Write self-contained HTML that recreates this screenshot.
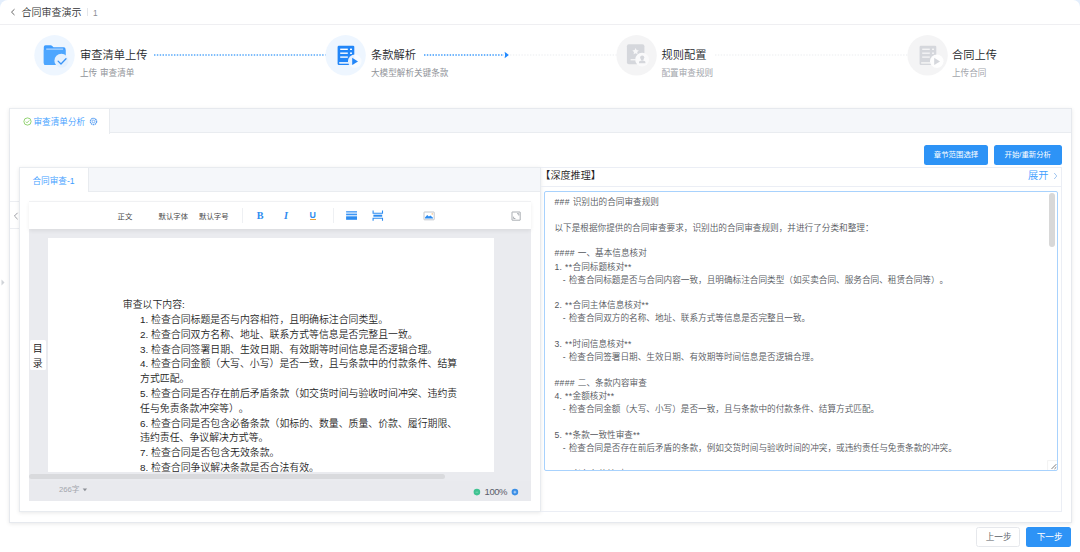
<!DOCTYPE html>
<html lang="zh-CN">
<head>
<meta charset="utf-8">
<title>合同审查演示</title>
<style>
*{box-sizing:border-box;margin:0;padding:0}
html,body{width:1080px;height:552px;overflow:hidden;background:#fff}
body{text-spacing-trim:space-all;font-family:"Liberation Sans","Noto Sans CJK SC",sans-serif;color:#303133;position:relative}
.abs{position:absolute}
.t{position:absolute;white-space:nowrap;line-height:1}
/* page corners */
.corner{position:absolute;width:30px;height:30px;background:#e3eefc}
.corner i{position:absolute;display:block;background:#fff}
/* header */
#hdr{left:0;top:0;width:1080px;height:25px;border-bottom:1px solid #efeff2}
/* steps */
.circ{position:absolute;width:41px;height:41px;border-radius:50%}
.circ.on{background:#ecf5ff}
.circ.off{background:#f3f3f4}
.st{font-size:11.25px;color:#26282c;font-weight:350}
.ss{font-size:8.6px;color:#909399;word-spacing:.4px}
.ss.off{color:#a2a5ab}
.dots{position:absolute;height:1.5px;background:repeating-linear-gradient(90deg,#46a0fb 0,#46a0fb 1.45px,transparent 1.45px,transparent 2.85px)}
.dots.off{height:1.2px;background:repeating-linear-gradient(90deg,#eceef1 0,#eceef1 1.45px,transparent 1.45px,transparent 2.85px)}
/* card */
#card{left:9px;top:108px;width:1063px;height:415px;border:1px solid #e6e9ee;background:#fff;box-shadow:0 1px 4px rgba(0,0,0,.09)}
#tabbar{left:0;top:0;width:1061px;height:24px;background:#f5f7fa;border-bottom:1px solid #e9ecf0}
#tab1{left:-1px;top:-1px;width:100.8px;height:25.5px;border-top:1px solid #e9ecf0;background:#fff;border-right:1px solid #e8ebef;border-left:1px solid #e8ebef}
.btn{position:absolute;background:#2d93f6;border-radius:2.5px;color:#fff;font-size:7.4px;text-align:center;font-weight:400}
/* left */
#lcard{left:19px;top:166.7px;width:522px;height:345.3px;border:1px solid #e8ebef;background:#fff;box-shadow:0 1px 4px rgba(0,0,0,.09)}
#ltabbar{left:0;top:0;width:520px;height:24px;background:#f5f7fa;border-bottom:1px solid #e9ecf0}
#ltab1{left:-1px;top:-1px;width:70px;height:25.5px;border-top:1px solid #e9ecf0;background:#fff;border-right:1px solid #e8ebef;border-left:1px solid #e8ebef}
#toolbar{left:29px;top:201px;width:502px;height:28px;background:#fff;box-shadow:0 1.5px 4px rgba(0,0,0,.07);border-top:1px solid #f0f1f3}
#ebody{left:29px;top:229px;width:502px;height:272.3px;background:#eaebef}
#paper{left:48px;top:238px;width:446px;height:233.6px;background:#fff;overflow:hidden}
.doc{position:absolute;font-size:9.9px;line-height:14.77px;color:#1f1f1f;white-space:nowrap;font-weight:350}
/* right */
#rpanel{left:541px;top:166.8px;width:521px;height:345px;border:1px solid #ebeef5;border-left:none}
#rhead{left:0;top:0;width:520px;height:19px;border-bottom:1px solid #ebeef5}
#ta{left:544px;top:191px;width:513.6px;height:280px;border:1.2px solid #a8d2fd;border-radius:2px;background:#fff;overflow:hidden}
.tx{position:absolute;left:9.4px;font-size:8.63px;font-weight:350;color:#54575d;white-space:nowrap;line-height:1}
.l{letter-spacing:.36px}
</style>
</head>
<body>
<!-- corners -->
<div class="corner" style="left:0;top:0;width:10px;height:10px;overflow:hidden"><i style="left:0;top:0;width:20px;height:20px;border-radius:8px 0 0 0"></i></div>
<div class="corner" style="right:0;top:0;width:10px;height:10px;overflow:hidden"><i style="right:0;top:0;width:20px;height:20px;border-radius:0 7px 0 0"></i></div>

<!-- header -->
<div id="hdr" class="abs"></div>
<svg class="abs" style="left:10px;top:8px" width="6" height="8" viewBox="0 0 6 8"><path d="M4.5 1.2 L1.5 4.1 L4.5 7" fill="none" stroke="#555" stroke-width="0.9"/></svg>
<div class="t" style="left:21.5px;top:8.1px;font-size:10px;color:#303133;font-weight:350">合同审查演示</div>
<div class="abs" style="left:87px;top:7.8px;width:1px;height:8.4px;background:#e4e6ea"></div>
<div class="t" style="left:93px;top:8.7px;font-size:8.3px;color:#8a8d93">1</div>

<!-- steps -->
<svg class="abs" style="left:34.3px;top:34.7px" width="41" height="41" viewBox="0 0 41 41">
  <circle cx="20.5" cy="20.3" r="20.2" fill="#eef6ff"/>
  <path d="M9.8 12 a1.7 1.7 0 0 1 1.7 -1.7 h5.2 q0.9 0 1.5 0.6 l1.3 1.3 h10.3 a1.7 1.7 0 0 1 1.7 1.7 v14.4 a1.7 1.7 0 0 1 -1.7 1.7 h-18.3 a1.7 1.7 0 0 1 -1.7 -1.7 z" fill="#3f9dff"/>
  <path d="M9.8 14.8 h21.7 v13.5 a1.7 1.7 0 0 1 -1.7 1.7 h-18.3 a1.7 1.7 0 0 1 -1.7 -1.7 z" fill="#4da6ff"/>
  <rect x="12.2" y="13.6" width="17" height="1" fill="#cfe6ff"/>
  <circle cx="27.4" cy="25.7" r="7" fill="#e4f1ff"/>
  <path d="M24.1 26.1 l2.9 2.9 l5 -5.2" fill="none" stroke="#3a94f6" stroke-width="1.3" stroke-linecap="round" stroke-linejoin="round"/>
</svg>
<div class="t st" style="left:80px;top:49.5px">审查清单上传</div>
<div class="t ss" style="left:80px;top:68.6px">上传 审查清单</div>
<svg class="abs" style="left:153.7px;top:53.35px" width="172.0" height="4" viewBox="0 0 172.0 4"><line x1="0" y1="2" x2="172.0" y2="2" stroke="#55a8fa" stroke-width="1.45" stroke-dasharray="1.45 1.4"/></svg>

<svg class="abs" style="left:325.2px;top:35px" width="41" height="41" viewBox="0 0 41 41">
  <circle cx="20.6" cy="20.3" r="20.2" fill="#eef6ff"/>
  <rect x="12.6" y="10.8" width="16.7" height="19.2" rx="1.3" fill="#2286f8"/>
  <rect x="15.2" y="13.6" width="7.6" height="1.4" fill="#fff"/>
  <rect x="25" y="13.6" width="2" height="1.4" fill="#fff"/>
  <rect x="15.2" y="17.5" width="7.6" height="1.4" fill="#fff"/>
  <rect x="25" y="17.5" width="2" height="1.4" fill="#fff"/>
  <rect x="15.2" y="21.4" width="7.6" height="1.4" fill="#fff"/>
  <rect x="14" y="27" width="9.8" height="1.7" rx="0.8" fill="#fff" fill-opacity="0.85"/>
  <circle cx="29.8" cy="26.3" r="6.8" fill="#f8fbff" fill-opacity="0.93"/>
  <path d="M27.2 22.7 L33 26.5 L27.2 30 z" fill="#2286f8"/>
</svg>
<div class="t st" style="left:371px;top:49.5px">条款解析</div>
<div class="t ss" style="left:371px;top:68.6px">大模型解析关键条款</div>
<svg class="abs" style="left:424.0px;top:53.25px" width="80.0" height="4" viewBox="0 0 80.0 4"><line x1="0" y1="2" x2="80.0" y2="2" stroke="#3f9cfb" stroke-width="1.6" stroke-dasharray="1.45 1.4"/></svg>
<svg class="abs" style="left:503.6px;top:51.2px" width="6" height="8" viewBox="0 0 6 8"><path d="M0.6 0.7 L4.9 4 L0.6 7.3 L1.1 4 z" fill="#2089ff"/></svg>
<svg class="abs" style="left:510.0px;top:53.25px" width="107.0" height="4" viewBox="0 0 107.0 4"><line x1="0" y1="2" x2="107.0" y2="2" stroke="#ebedf0" stroke-width="1.2" stroke-dasharray="1.45 1.4"/></svg>

<svg class="abs" style="left:616px;top:35px" width="41" height="41" viewBox="0 0 41 41">
  <circle cx="20.6" cy="20.3" r="20.2" fill="#f4f4f5"/>
  <rect x="10.9" y="9.2" width="17.5" height="20.1" rx="2" fill="#d5d7dc"/>
  <path d="M19.6 13 l1 2.1 l2.3 0.3 l-1.7 1.6 l0.4 2.3 l-2 -1.1 l-2 1.1 l0.4 -2.3 l-1.7 -1.6 l2.3 -0.3 z" fill="#f7f7f8"/>
  <rect x="14.6" y="24" width="5" height="1.4" fill="#f4f4f5"/>
  <circle cx="26.1" cy="24.7" r="6.9" fill="#fafafb"/>
  <circle cx="26.2" cy="22.5" r="2.1" fill="#d5d7dc"/>
  <path d="M24.9 24 h2.6 v1.2 h-2.6 z M23 28.3 v-1.2 q0 -1.7 3.2 -1.7 q3.2 0 3.2 1.7 v1.2 z" fill="#d5d7dc"/>
</svg>
<div class="t st" style="left:661.5px;top:49.5px">规则配置</div>
<div class="t ss off" style="left:661.5px;top:68.6px">配置审查规则</div>
<svg class="abs" style="left:715.0px;top:53.25px" width="193.0" height="4" viewBox="0 0 193.0 4"><line x1="0" y1="2" x2="193.0" y2="2" stroke="#ebedf0" stroke-width="1.2" stroke-dasharray="1.45 1.4"/></svg>

<svg class="abs" style="left:907px;top:35px" width="41" height="41" viewBox="0 0 41 41">
  <circle cx="20.6" cy="20.3" r="20.2" fill="#f4f4f5"/>
  <rect x="12.6" y="10.8" width="16.7" height="19.2" rx="1.3" fill="#d5d7dc"/>
  <rect x="15.2" y="13.6" width="7.6" height="1.4" fill="#f4f4f5"/>
  <rect x="25" y="13.6" width="2" height="1.4" fill="#f4f4f5"/>
  <rect x="15.2" y="17.5" width="7.6" height="1.4" fill="#f4f4f5"/>
  <rect x="25" y="17.5" width="2" height="1.4" fill="#f4f4f5"/>
  <rect x="15.2" y="21.4" width="7.6" height="1.4" fill="#f4f4f5"/>
  <rect x="14" y="27" width="9.8" height="1.7" rx="0.8" fill="#f4f4f5" fill-opacity="0.85"/>
  <circle cx="29.8" cy="26.3" r="6.8" fill="#fefefe" fill-opacity="0.96"/>
  <path d="M27.2 22.7 L33 26.5 L27.2 30 z" fill="#d5d7dc"/>
</svg>
<div class="t st" style="left:952px;top:49.5px">合同上传</div>
<div class="t ss off" style="left:952px;top:68.6px">上传合同</div>

<!-- main card -->
<div id="card" class="abs">
  <div id="tabbar" class="abs"></div>
  <div id="tab1" class="abs"></div>
</div>
<svg class="abs" style="left:22.5px;top:117.4px" width="9" height="9" viewBox="0 0 9 9"><circle cx="4.5" cy="4.5" r="3.6" fill="none" stroke="#67c23a" stroke-width="0.7"/><path d="M2.8 4.6 l1.2 1.2 l2.2 -2.3" fill="none" stroke="#67c23a" stroke-width="0.7"/></svg>
<div class="t" style="left:33.5px;top:117.8px;font-size:8.6px;color:#409eff;font-weight:350">审查清单分析</div>
<svg class="abs" style="left:88.5px;top:117.4px" width="9" height="9" viewBox="0 0 9 9"><circle cx="4.5" cy="4.5" r="3.1" fill="none" stroke="#5fa2f2" stroke-width="1.3" stroke-dasharray="1.5 0.5"/><circle cx="4.5" cy="4.5" r="1.3" fill="none" stroke="#5fa2f2" stroke-width="0.8"/></svg>

<div class="btn" style="left:924px;top:145px;width:64px;height:20px;line-height:19.6px">章节范围选择</div>
<div class="btn" style="left:994px;top:145px;width:67.5px;height:20px;line-height:19.6px">开始/重新分析</div>

<!-- collapse handle -->
<div class="abs" style="left:10px;top:201px;width:10px;height:27.5px;border:1px solid #eceef2;border-right:none;border-left:none;background:#fff"></div>
<svg class="abs" style="left:12.5px;top:212px" width="6" height="8" viewBox="0 0 6 8"><path d="M4.6 0.8 L1.4 4 L4.6 7.2" fill="none" stroke="#8a8d93" stroke-width="0.85"/></svg>
<svg class="abs" style="left:1px;top:278.5px" width="4" height="7" viewBox="0 0 4 7"><path d="M0.5 0.5 L3.5 3.5 L0.5 6.5 z" fill="#d0d3d8"/></svg>

<!-- left card -->
<div id="lcard" class="abs">
  <div id="ltabbar" class="abs"></div>
  <div id="ltab1" class="abs"></div>
</div>
<div class="t" style="left:32.5px;top:176.5px;font-size:8.6px;color:#409eff;font-weight:350">合同审查-1</div>

<div id="ebody" class="abs"></div>
<div id="toolbar" class="abs"></div>
<div class="t" style="left:117.5px;top:213px;font-size:7.4px;color:#4a4a4a">正文</div>
<div class="t" style="left:158.5px;top:213px;font-size:7.4px;color:#4a4a4a">默认字体</div>
<div class="t" style="left:199px;top:213px;font-size:7.4px;color:#4a4a4a">默认字号</div>
<div class="abs" style="left:241.7px;top:208px;width:1px;height:14.5px;background:#eef0f3"></div>
<div class="t" style="left:256.7px;top:211.3px;font-size:10.2px;color:#2d8cf0;font-family:'Liberation Serif',serif;font-weight:700">B</div>
<div class="t" style="left:284px;top:211.3px;font-size:10.2px;color:#2d8cf0;font-family:'Liberation Serif',serif;font-weight:700;font-style:italic">I</div>
<div class="t" style="left:309.5px;top:211.3px;font-size:8.8px;color:#2d8cf0;font-weight:700">U</div>
<div class="abs" style="left:310px;top:219.2px;width:6px;height:1px;background:#e6a23c"></div>
<div class="abs" style="left:333px;top:208px;width:1px;height:14.5px;background:#eef0f3"></div>
<svg class="abs" style="left:345px;top:210px" width="14" height="12" viewBox="0 0 14 12"><rect x="1.1" y="1.2" width="10.9" height="1.3" fill="#3d96f5"/><rect x="1.1" y="3.6" width="10.9" height="1.7" fill="#3d96f5"/><rect x="1.1" y="6.3" width="10.9" height="3.5" fill="#2d8cf0"/></svg>
<svg class="abs" style="left:371px;top:210px" width="14" height="12" viewBox="0 0 14 12"><path d="M2.1 0.6 v2.6 h9.4 v-2.6 M2.1 10.8 v-2.6 h9.4 v2.6" fill="none" stroke="#2d8cf0" stroke-width="1.1"/><rect x="2.4" y="4.7" width="8.8" height="2" fill="#2d8cf0"/></svg>
<svg class="abs" style="left:422.8px;top:211px" width="12" height="10" viewBox="0 0 12 10"><rect x="1" y="1" width="10.2" height="7.8" rx="0.5" fill="#fff" stroke="#b3b7be" stroke-width="0.8"/><path d="M2 7.6 L2 6.4 L4.2 3.9 L5.9 5.6 L7.4 4.4 L10 6.8 L10 7.6 z" fill="#2d8cf0"/><circle cx="9.2" cy="2.9" r="0.6" fill="#f0a040"/></svg>
<svg class="abs" style="left:510.5px;top:210.5px" width="11" height="11" viewBox="0 0 11 11"><rect x="1" y="1" width="8.2" height="8.2" rx="0.2" fill="none" stroke="#a2a6ac" stroke-width="0.9"/><path d="M6 2.7 h1.8 v1.8 M4.4 7.5 h-1.8 v-1.8" fill="none" stroke="#a2a6ac" stroke-width="0.9"/></svg>

<div id="paper" class="abs">
  <div class="doc" style="left:74.8px;top:60.4px">审查以下内容:<br>
  <span style="padding-left:17.3px">1. 检查合同标题是否与内容相符，且明确标注合同类型。</span><br>
  <span style="padding-left:17.3px">2. 检查合同双方名称、地址、联系方式等信息是否完整且一致。</span><br>
  <span style="padding-left:17.3px">3. 检查合同签署日期、生效日期、有效期等时间信息是否逻辑合理。</span><br>
  <span style="padding-left:17.3px">4. 检查合同金额（大写、小写）是否一致，且与条款中的付款条件、结算</span><br>
  <span style="padding-left:17.3px">方式匹配。</span><br>
  <span style="padding-left:17.3px">5. 检查合同是否存在前后矛盾条款（如交货时间与验收时间冲突、违约责</span><br>
  <span style="padding-left:17.3px">任与免责条款冲突等）。</span><br>
  <span style="padding-left:17.3px">6. 检查合同是否包含必备条款（如标的、数量、质量、价款、履行期限、</span><br>
  <span style="padding-left:17.3px">违约责任、争议解决方式等。</span><br>
  <span style="padding-left:17.3px">7. 检查合同是否包含无效条款。</span><br>
  <span style="padding-left:17.3px">8. 检查合同争议解决条款是否合法有效。</span></div>
</div>
<div class="abs" style="left:29.8px;top:340.4px;width:16.3px;height:29.5px;background:#fff;border-radius:1.5px"></div>
<div class="t" style="left:32.8px;top:342px;font-size:9.9px;line-height:14.5px;color:#161616;white-space:normal;width:10.5px;font-weight:350">目录</div>
<div class="abs" style="left:29px;top:474px;width:416px;height:5px;border-radius:3px;background:#d9dadd"></div>
<div class="abs" style="left:29px;top:481.3px;width:502px;height:20px;background:#e9eaee"></div>
<div class="t" style="left:59px;top:485.5px;font-size:7.7px;color:#a3a6ad">266字</div>
<svg class="abs" style="left:82px;top:488px" width="6" height="4" viewBox="0 0 6 4"><path d="M0.7 0.6 h4.4 l-2.2 2.7 z" fill="#8c8f96"/></svg>
<svg class="abs" style="left:473px;top:488px" width="8" height="8" viewBox="0 0 8 8"><circle cx="3.9" cy="4.1" r="3.3" fill="#3fc391"/><rect x="2.6" y="3.8" width="2.6" height="0.7" fill="#8fdcc0"/></svg>
<div class="t" style="left:484.6px;top:487.3px;font-size:9.5px;letter-spacing:-.45px;color:#5a5d6b">100%</div>
<svg class="abs" style="left:510.7px;top:488px" width="8" height="8" viewBox="0 0 8 8"><circle cx="3.9" cy="4.1" r="3.3" fill="#3a8ee6"/><path d="M3.9 2.7 v2.8 M2.5 4.1 h2.8" stroke="#cfe4fa" stroke-width="0.8" fill="none"/></svg>

<!-- right panel -->
<div id="rpanel" class="abs"><div id="rhead" class="abs"></div></div>
<div class="t" style="left:540.3px;top:170.5px;font-size:10.1px;color:#222;font-weight:350">【深度推理】</div>
<div class="t" style="left:1028px;top:171px;font-size:10.2px;color:#409eff;font-weight:350">展开</div>
<svg class="abs" style="left:1053px;top:172px" width="5" height="8" viewBox="0 0 5 8"><path d="M1.2 1 L3.8 4 L1.2 7" fill="none" stroke="#8ab9ee" stroke-width="0.8"/></svg>

<div id="ta" class="abs">
  <div class="tx" style="top:5.8px"><span class="l">### </span>识别出的合同审查规则</div>
  <div class="tx" style="top:31.8px">以下是根据你提供的合同审查要求，识别出的合同审查规则，并进行了分类和整理：</div>
  <div class="tx" style="top:57.3px"><span class="l">#### </span>一、基本信息核对</div>
  <div class="tx" style="top:70.8px"><span class="l">1. **</span>合同标题核对<span class="l">**</span></div>
  <div class="tx" style="top:83.8px"><span class="l">&nbsp;&nbsp;&nbsp;- </span>检查合同标题是否与合同内容一致，且明确标注合同类型（如买卖合同、服务合同、租赁合同等）。</div>
  <div class="tx" style="top:109.3px"><span class="l">2. **</span>合同主体信息核对<span class="l">**</span></div>
  <div class="tx" style="top:122.3px"><span class="l">&nbsp;&nbsp;&nbsp;- </span>检查合同双方的名称、地址、联系方式等信息是否完整且一致。</div>
  <div class="tx" style="top:148.3px"><span class="l">3. **</span>时间信息核对<span class="l">**</span></div>
  <div class="tx" style="top:161.3px"><span class="l">&nbsp;&nbsp;&nbsp;- </span>检查合同签署日期、生效日期、有效期等时间信息是否逻辑合理。</div>
  <div class="tx" style="top:186.8px"><span class="l">#### </span>二、条款内容审查</div>
  <div class="tx" style="top:199.8px"><span class="l">4. **</span>金额核对<span class="l">**</span></div>
  <div class="tx" style="top:213.3px"><span class="l">&nbsp;&nbsp;&nbsp;- </span>检查合同金额（大写、小写）是否一致，且与条款中的付款条件、结算方式匹配。</div>
  <div class="tx" style="top:238.8px"><span class="l">5. **</span>条款一致性审查<span class="l">**</span></div>
  <div class="tx" style="top:251.8px"><span class="l">&nbsp;&nbsp;&nbsp;- </span>检查合同是否存在前后矛盾的条款，例如交货时间与验收时间的冲突，或违约责任与免责条款的冲突。</div>
  <div class="tx" style="top:277.8px"><span class="l">6. **</span>必备条款核对<span class="l">**</span></div>
  <div class="abs" style="left:504.4px;top:0.8px;width:5.6px;height:54.5px;border-radius:3px;background:#d8d8d8"></div>
  <svg class="abs" style="left:501.8px;top:268.2px" width="10" height="10" viewBox="0 0 10 10"><path d="M0.6 10 V0.6 H10" stroke="#ececec" stroke-width="0.7" fill="none"/><path d="M9.3 4.2 L4.6 8.9 M9.3 7.2 L7.5 8.9" stroke="#555" stroke-width="0.8" fill="none"/></svg>
</div>

<!-- bottom buttons -->
<div class="abs" style="left:976.4px;top:527.2px;width:44px;height:19.6px;border:1px solid #e6e8ec;border-radius:2.5px;background:#fff"></div>
<div class="t" style="left:985.7px;top:533.2px;font-size:8.63px;color:#5a5e66;font-weight:350">上一步</div>
<div class="abs" style="left:1026.4px;top:527.2px;width:44.8px;height:19.6px;border-radius:2.5px;background:#2d93f6"></div>
<div class="t" style="left:1036.7px;top:533.2px;font-size:8.63px;color:#fff">下一步</div>
</body>
</html>
